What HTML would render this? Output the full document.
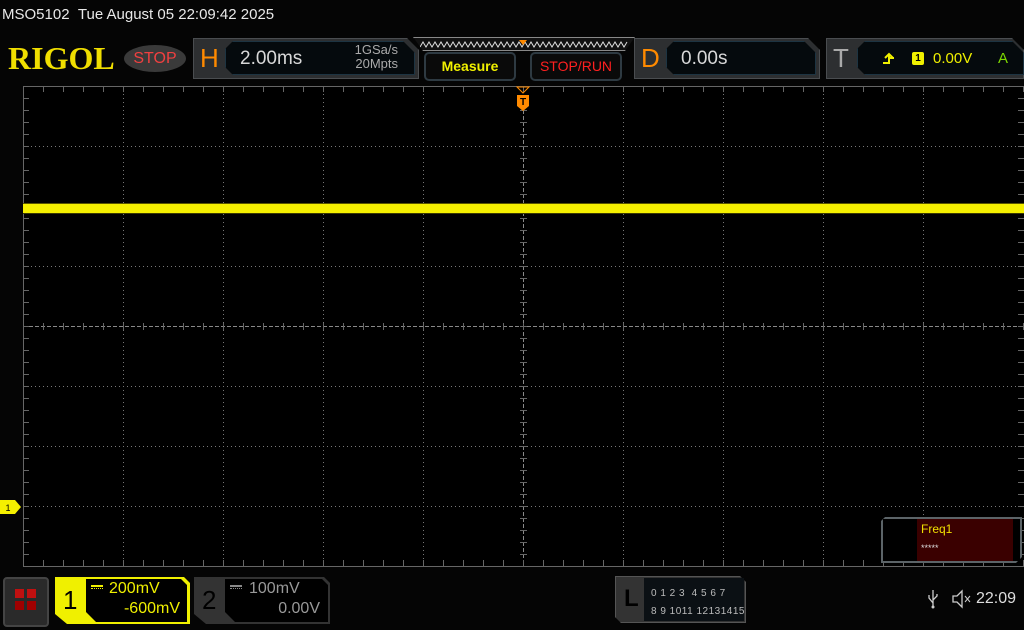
<!DOCTYPE html>
<html><head><meta charset="utf-8"><style>
*{margin:0;padding:0;box-sizing:border-box}
body{width:1024px;height:630px;background:#050505;position:relative;overflow:hidden;font-family:"Liberation Sans",sans-serif}
.a{position:absolute}
.panel{position:absolute;background:#2d2f31;border:1px solid #4a4d50;clip-path:polygon(0 0,calc(100% - 12px) 0,100% 12px,100% 100%,0 100%)}
.inner{position:absolute;background:#050a0d;border:1px solid #1d3442;clip-path:polygon(8px 0,calc(100% - 12px) 0,100% 12px,100% 100%,8px 100%,0 calc(100% - 8px),0 8px)}
.btn{position:absolute;background:#0a0a0a;border:2px solid #2e3a42;border-radius:5px;font-weight:bold;font-size:14px;text-align:center;line-height:24px}
</style></head><body>
<div class="a" style="left:2px;top:6px;color:#e8e8e8;font-size:15px">MSO5102&nbsp;&nbsp;Tue August 05 22:09:42 2025</div>
<div class="a" style="left:8px;top:40px;color:#f0de00;font-family:'Liberation Serif',serif;font-weight:bold;font-size:32px;letter-spacing:0px;line-height:36px">RIGOL</div>
<div class="a" style="left:124px;top:45px;width:62px;height:27px;border-radius:50%;background:#3a3a3a;color:#f04040;font-size:16px;text-align:center;line-height:27px">STOP</div>
<div class="panel" style="left:193px;top:38px;width:226px;height:41px"></div>
<div class="a" style="left:200px;top:43px;color:#ff8a00;font-size:26px">H</div>
<div class="inner" style="left:225px;top:41px;width:190px;height:34px"></div>
<div class="a" style="left:240px;top:48px;color:#d8d8d8;font-size:19px">2.00ms</div>
<div class="a" style="left:340px;top:43px;color:#aaa;font-size:13px;line-height:14px;text-align:right;width:58px">1GSa/s<br>20Mpts</div>
<div class="a" style="left:413px;top:37px;width:222px;height:14px;border:1px solid #888;background:#111;clip-path:polygon(0 0,100% 0,calc(100% - 10px) 100%,10px 100%)"></div>
<svg class="a" style="left:420px;top:39px" width="210" height="10"><polyline fill="none" stroke="#ddd" stroke-width="1" points="0,8 3,3 6,8 9,3 12,8 15,3 18,8 21,3 24,8 27,3 30,8 33,3 36,8 39,3 42,8 45,3 48,8 51,3 54,8 57,3 60,8 63,3 66,8 69,3 72,8 75,3 78,8 81,3 84,8 87,3 90,8 93,3 96,8 99,3 102,8 105,3 108,8 111,3 114,8 117,3 120,8 123,3 126,8 129,3 132,8 135,3 138,8 141,3 144,8 147,3 150,8 153,3 156,8 159,3 162,8 165,3 168,8 171,3 174,8 177,3 180,8 183,3 186,8 189,3 192,8 195,3 198,8 201,3 204,8 207,3"/><polygon points="99,1 107,1 103,6" fill="#ff8a00"/></svg>
<div class="btn" style="left:424px;top:52px;width:92px;height:29px;color:#f0f000">Measure</div>
<div class="btn" style="left:530px;top:52px;width:92px;height:29px;color:#ff2020;font-weight:normal">STOP/RUN</div>
<div class="panel" style="left:634px;top:38px;width:186px;height:41px"></div>
<div class="a" style="left:641px;top:43px;color:#ff8a00;font-size:26px">D</div>
<div class="inner" style="left:666px;top:41px;width:150px;height:34px"></div>
<div class="a" style="left:681px;top:48px;color:#d8d8d8;font-size:19px">0.00s</div>
<div class="panel" style="left:826px;top:38px;width:198px;height:41px"></div>
<div class="a" style="left:833px;top:43px;color:#aaa;font-size:26px">T</div>
<div class="inner" style="left:857px;top:41px;width:167px;height:34px"></div>
<svg class="a" style="left:880px;top:50px" width="16" height="16"><path d="M3 13H9V4M5 8L9 4L13 8M9 8H14" stroke="#f0f000" stroke-width="2" fill="none"/></svg>
<div class="a" style="left:912px;top:52px;width:12px;height:13px;background:#f0f000;border-radius:2px;color:#000;font-size:10px;font-weight:bold;text-align:center;line-height:13px">1</div>
<div class="a" style="left:933px;top:50px;color:#f0f000;font-size:15px">0.00V</div>
<div class="a" style="left:998px;top:50px;color:#7cd800;font-size:15px">A</div>

<svg class="a" style="left:0;top:84px" width="1024" height="486">
<rect x="23" y="2" width="1001" height="480" fill="#000"/>
<g stroke="#777" stroke-width="1" stroke-dasharray="1,3" fill="none">
<path d="M123.5 2V482M223.5 2V482M323.5 2V482M423.5 2V482M623.5 2V482M723.5 2V482M823.5 2V482M923.5 2V482"/>
<path d="M23 62.5H1024M23 122.5H1024M23 182.5H1024M23 302.5H1024M23 362.5H1024M23 422.5H1024"/>
</g>
<g stroke="#888" stroke-width="1" stroke-dasharray="4,2" fill="none"><path d="M523.5 14V482M23 242.5H1024"/></g>
<g stroke="#666" stroke-width="1" fill="none">
<path d="M23.5 2V482M23 2.5H1024M23 482.5H1024"/>
</g>
<g stroke="#666" stroke-width="1" id="ticks"></g>
<rect x="23" y="119" width="1001" height="1" fill="#5a5600"/>
<rect x="23" y="129" width="1001" height="1" fill="#3a3800"/>
<rect x="23" y="120" width="1001" height="9" fill="#f5f000"/>
</svg>
<script>
var t=document.getElementById('ticks'),s='';
for(var x=43;x<1024;x+=20){s+='<path d="M'+(x+.5)+' 2V8M'+(x+.5)+' 476V482M'+(x+.5)+' 239V246"/>';}
for(var y=14;y<482;y+=12){s+='<path d="M23 '+(y+.5)+'H29M1018 '+(y+.5)+'H1024M520 '+(y+.5)+'H527"/>';}
t.innerHTML=s;
</script>
<svg class="a" style="left:515px;top:86px" width="16" height="26"><polygon points="2,1 14,1 8,7" fill="none" stroke="#ff8a00"/><path d="M2 9H14V20L8 25L2 20Z" fill="#ff8a00"/><text x="8" y="19" font-size="10" font-family="Liberation Sans" font-weight="bold" text-anchor="middle" fill="#000">T</text></svg>
<svg class="a" style="left:0;top:500px" width="22" height="14"><path d="M0 0H15L21 7L15 14H0Z" fill="#f5f000"/><text x="8" y="11" font-size="9" font-family="Liberation Sans" text-anchor="middle" fill="#000">1</text></svg>

<div class="a" style="left:881px;top:517px;width:141px;height:46px;background:#000;border:2px solid #5c6468;clip-path:polygon(4px 0,100% 0,100% calc(100% - 6px),calc(100% - 6px) 100%,0 100%,0 4px)"></div>
<div class="a" style="left:917px;top:519px;width:96px;height:42px;background:#3a0000"></div>
<div class="a" style="left:921px;top:522px;color:#f0e000;font-size:12px">Freq1</div>
<div class="a" style="left:921px;top:543px;color:#ddd;font-size:9px">*****</div>

<div class="a" style="left:3px;top:577px;width:46px;height:50px;background:#2a2a2a;border:2px solid #444;border-radius:4px"></div>
<div class="a" style="left:15px;top:589px;width:9px;height:9px;background:#c01010"></div>
<div class="a" style="left:27px;top:589px;width:9px;height:9px;background:#c01010"></div>
<div class="a" style="left:15px;top:601px;width:9px;height:9px;background:#a00000"></div>
<div class="a" style="left:27px;top:601px;width:9px;height:9px;background:#a00000"></div>

<div class="a" style="left:55px;top:577px;width:135px;height:47px;background:#f0f000;clip-path:polygon(0 0,calc(100% - 6px) 0,100% 6px,100% 100%,12px 100%,0 calc(100% - 10px))"></div>
<div class="a" style="left:86px;top:579px;width:101px;height:43px;background:#000;clip-path:polygon(0 0,calc(100% - 6px) 0,100% 6px,100% 100%,10px 100%,0 calc(100% - 10px))"></div>
<div class="a" style="left:63px;top:585px;color:#000;font-size:26px">1</div>
<div class="a" style="left:91px;top:585px;width:12px;border-top:2px solid #f0f000;border-bottom:1px dotted #f0f000;height:4px"></div>
<div class="a" style="left:109px;top:580px;color:#f0f000;font-size:16px">200mV</div>
<div class="a" style="left:100px;top:600px;width:80px;text-align:right;color:#f0f000;font-size:16px">-600mV</div>

<div class="a" style="left:194px;top:577px;width:136px;height:47px;background:#333;clip-path:polygon(0 0,calc(100% - 6px) 0,100% 6px,100% 100%,12px 100%,0 calc(100% - 10px))"></div>
<div class="a" style="left:225px;top:579px;width:103px;height:43px;background:#000;clip-path:polygon(0 0,calc(100% - 6px) 0,100% 6px,100% 100%,10px 100%,0 calc(100% - 10px))"></div>
<div class="a" style="left:202px;top:585px;color:#000;font-size:26px">2</div>
<div class="a" style="left:230px;top:585px;width:12px;border-top:2px solid #888;border-bottom:1px dotted #888;height:4px"></div>
<div class="a" style="left:249px;top:580px;color:#999;font-size:16px">100mV</div>
<div class="a" style="left:240px;top:600px;width:80px;text-align:right;color:#999;font-size:16px">0.00V</div>

<div class="a" style="left:615px;top:576px;width:131px;height:47px;background:#333;border:1px solid #555;clip-path:polygon(0 0,calc(100% - 6px) 0,100% 6px,100% 100%,6px 100%,0 calc(100% - 6px))"></div>
<div class="a" style="left:644px;top:578px;width:100px;height:43px;background:#0b1014"></div>
<div class="a" style="left:624px;top:585px;color:#000;font-size:24px;font-weight:bold">L</div>
<div class="a" style="left:651px;top:585px;color:#bbb;font-size:10px;line-height:18px;letter-spacing:0.5px">0 1 2 3&nbsp;&nbsp;4 5 6 7<br>8 9 1011 12131415</div>

<svg class="a" style="left:927px;top:589px" width="12" height="20"><path d="M6 1V18M6 14L2 9V6M6 11L10 7V5" stroke="#ccc" stroke-width="1.3" fill="none"/><circle cx="6" cy="18" r="1.5" fill="#ccc"/></svg>
<svg class="a" style="left:951px;top:589px" width="22" height="20"><path d="M2 7H6L11 2V18L6 13H2Z" fill="none" stroke="#ccc" stroke-width="1.3"/><path d="M14 7L19 13M19 7L14 13" stroke="#ccc"/></svg>
<div class="a" style="left:976px;top:590px;color:#ddd;font-size:16px">22:09</div>
</body></html>
